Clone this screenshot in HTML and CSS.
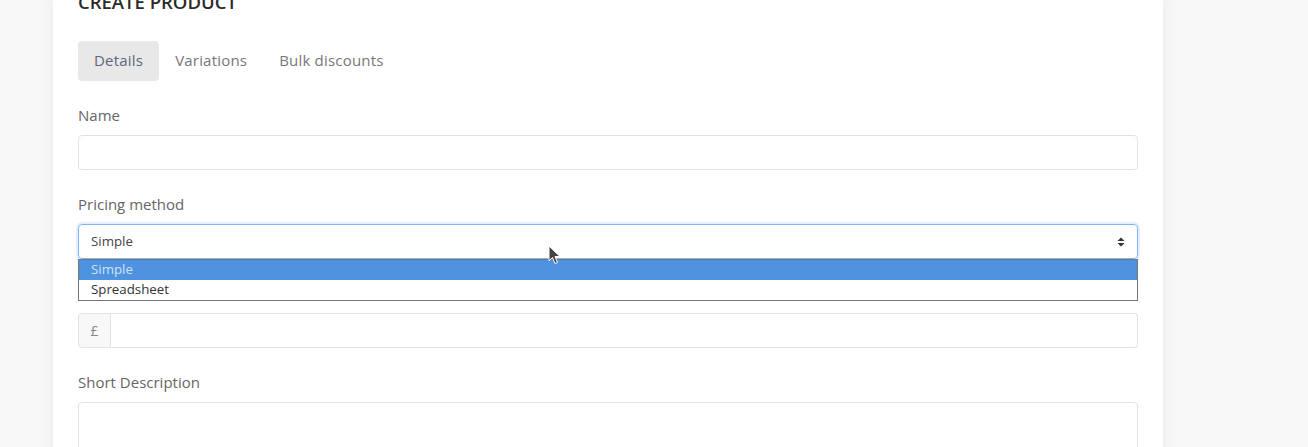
FILE: index.html
```html
<!DOCTYPE html>
<html>
<head>
<meta charset="utf-8">
<link rel="stylesheet" href="styles.css">
</head>
<body>
<div class="page">
  <div class="card">
    <h1 class="title">CREATE PRODUCT</h1>
    <div class="tabs">
      <span class="tab active">Details</span>
      <span class="tab">Variations</span>
      <span class="tab">Bulk discounts</span>
    </div>
    <div class="group">
      <label class="label">Name</label>
      <div class="input"></div>
    </div>
    <div class="group select-group">
      <label class="label">Pricing method</label>
      <div class="select">
        <span>Simple</span>
        <svg class="arrows" width="8" height="10" viewBox="0 0 8 10"><path d="M4 0.5 L7.5 4 H0.5 Z M4 9.5 L7.5 6 H0.5 Z" fill="#333"/></svg>
      </div>
      <div class="dropdown">
        <div class="option selected">Simple</div>
        <div class="option">Spreadsheet</div>
      </div>
      <svg class="cursor" width="14" height="22" viewBox="0 0 14 22"><path d="M1 1 L1 16 L4.5 12.5 L7 18.5 L9.5 17.5 L7 11.5 L12 11.5 Z" fill="#444" stroke="#fff" stroke-width="1"/></svg>
    </div>
    <div class="group">
      <label class="label">Price</label>
      <div class="input-group">
        <span class="addon">£</span>
        <div class="input flex"></div>
      </div>
    </div>
    <div class="group">
      <label class="label">Short Description</label>
      <div class="textarea"></div>
    </div>
  </div>
</div>
</body>
</html>
```

FILE: styles.css
```css
* { box-sizing: border-box; }
html, body { margin: 0; padding: 0; }
body {
  background: #f8f8f8;
  font-family: "Open Sans", "Lato", sans-serif;
  height: 447px;
  overflow: hidden;
}
.page {
  padding-left: 53px;
  width: 1163px;
}
.card {
  background: #fff;
  width: 1110px;
  padding: 0 25px;
  height: 600px;
  box-shadow: 0 0 18px rgba(0,0,0,0.06);
}
.title {
  margin: -9px 0 0 0;
  font-size: 18.5px;
  font-weight: 600;
  color: #2a2a2a;
  line-height: 22px;
}
.tabs {
  display: flex;
  margin-top: 28px;
}
.tab {
  height: 40px;
  line-height: 38px;
  padding: 0 16px;
  font-size: 15px;
  letter-spacing: 0.2px;
  color: #777;
  border-radius: 4px;
}
.tab.active {
  background: #e8e8e8;
  color: #5b6778;
}
.group {
  margin-top: 24px;
}
.select-group { position: relative; }
.label {
  display: block;
  font-size: 15px;
  line-height: 21px;
  color: #666;
  margin-bottom: 9px;
}
.input {
  height: 35px;
  border: 1px solid #e2e2e2;
  border-radius: 4px;
  background: #fff;
}
.select {
  height: 35px;
  border: 1px solid #80b6f5;
  border-radius: 4px;
  box-shadow: 0 0 0 2px rgba(128,182,245,0.2);
  display: flex;
  align-items: center;
  justify-content: space-between;
  padding: 0 12px 2px 12px;
  font-size: 13.3px;
  color: #444;
}
.arrows { margin-top: 2px; }
.dropdown {
  position: absolute;
  left: 0;
  right: 0;
  top: 65px;
  border: 1px solid #767676;
  background: #fff;
  z-index: 2;
}
.option {
  height: 20px;
  line-height: 19px;
  padding-left: 12px;
  font-size: 13.3px;
  color: #333;
}
.option.selected {
  background: #4f92df;
  color: #cfe1f6;
}
.cursor {
  position: absolute;
  left: 470px;
  top: 51px;
  z-index: 3;
}
.input-group {
  display: flex;
  height: 35px;
}
.addon {
  width: 33px;
  background: #f8f8f8;
  border: 1px solid #e2e2e2;
  border-radius: 4px 0 0 4px;
  display: flex;
  align-items: center;
  justify-content: center;
  color: #888;
  font-size: 14px;
}
.input.flex {
  flex: 1;
  border-left: none;
  border-radius: 0 4px 4px 0;
}
.textarea {
  height: 80px;
  border: 1px solid #e2e2e2;
  border-radius: 4px;
}
```
